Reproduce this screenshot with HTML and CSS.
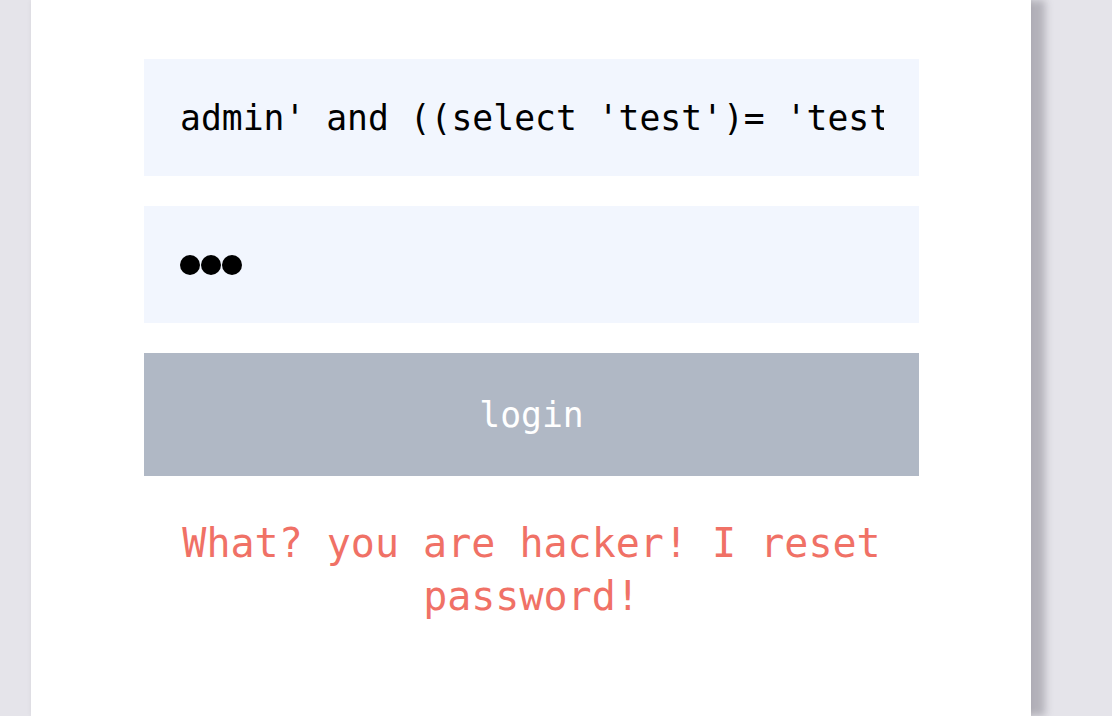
FILE: index.html
```html
<!DOCTYPE html>
<html>
<head>
<meta charset="utf-8">
<link rel="stylesheet" href="styles.css">
</head>
<body>
<div class="card">
  <form class="form">
    <div class="field user"><span class="val">admin' and ((select 'test')= 'test')#</span></div>
    <div class="field pw"><span class="dot"></span><span class="dot"></span><span class="dot"></span></div>
    <button class="btn" type="button">login</button>
    <p class="error">What? you are hacker! I reset password!</p>
  </form>
</div>
</body>
</html>
```
FILE: styles.css
```css
html, body {
  margin: 0;
  padding: 0;
  height: 100%;
  overflow: hidden;
}
body {
  background: #e5e4ea;
  font-family: "DejaVu Sans Mono", monospace;
}
.card {
  margin-left: 31px;
  width: 1000px;
  min-height: 100%;
  background: #ffffff;
  box-shadow: 0 0 5px rgba(0, 0, 0, 0.06), 14px 0 8px rgba(50, 48, 60, 0.28);
}
.form {
  margin: 0;
  padding: 59px 0 0 113px;
  width: 775px;
  display: flex;
  flex-direction: column;
}
.field {
  box-sizing: border-box;
  width: 775px;
  height: 117px;
  margin: 0 0 30px 0;
  padding: 0 35px 0 36px;
  background: #f2f6fe;
  color: #000;
  font-size: 34.7px;
  display: flex;
  align-items: center;
}
.user {
  overflow: hidden;
}
.val {
  display: block;
  width: 100%;
  overflow: hidden;
  white-space: pre;
}
.pw {
  gap: 1px;
}
.dot {
  width: 20px;
  height: 20px;
  border-radius: 50%;
  background: #000;
}
.btn {
  width: 775px;
  height: 123px;
  border: none;
  padding: 0;
  background: #b0b8c5;
  color: #fff;
  font-family: "DejaVu Sans Mono", monospace;
  font-size: 34.7px;
}
.error {
  margin: 41px 0 0 0;
  text-align: center;
  color: #f07166;
  font-size: 40px;
  line-height: 53px;
}
```
